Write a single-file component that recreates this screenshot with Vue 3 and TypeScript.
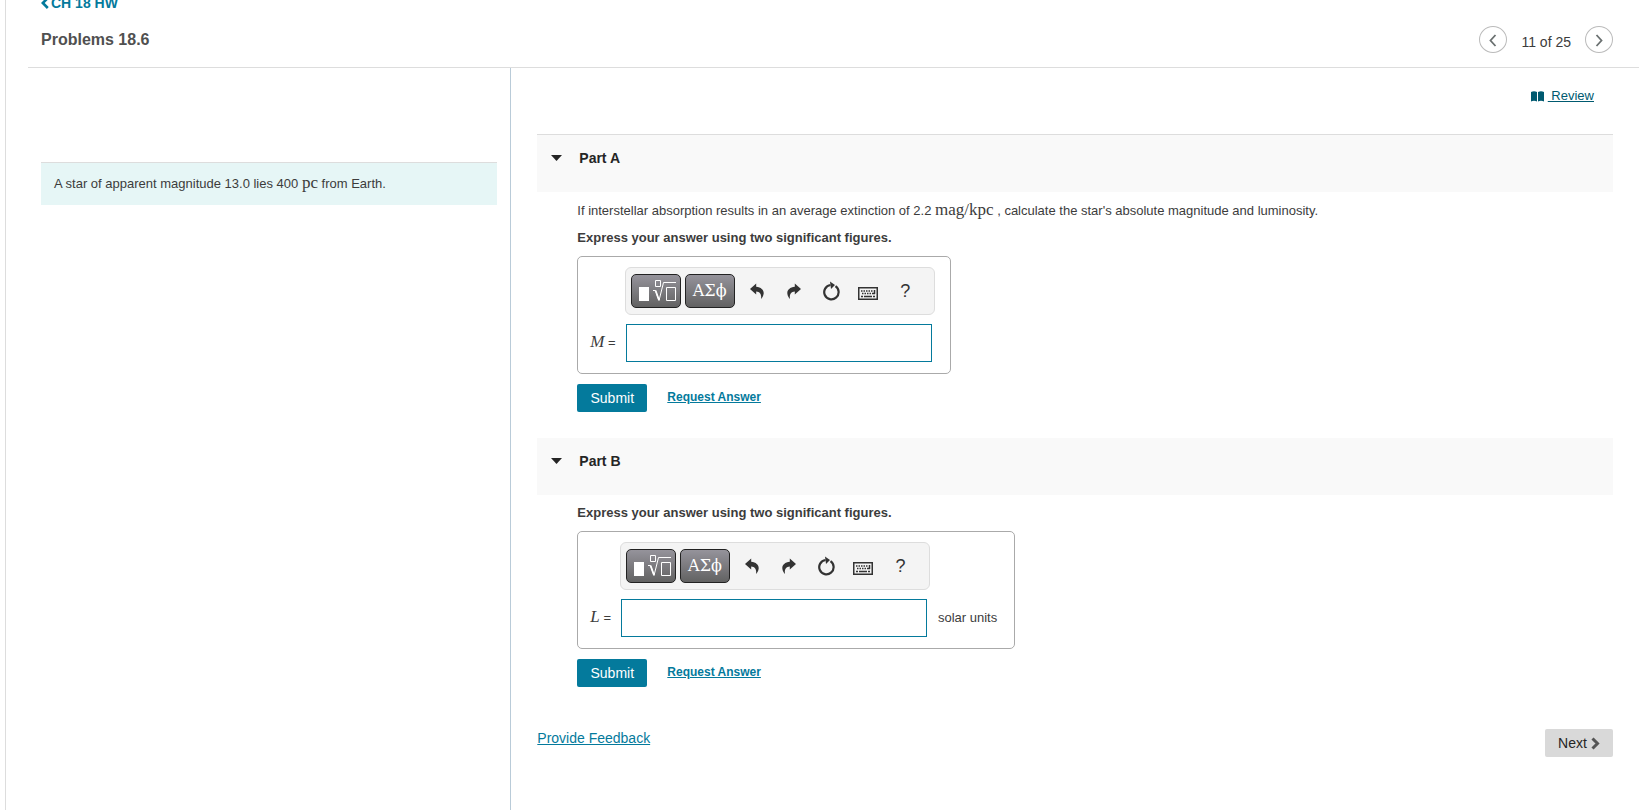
<script setup lang="ts">
import { reactive } from 'vue'

interface Part {
  id: string
  title: string
  hasQuestion: boolean
  variable: string
  unit: string
}

const parts: Part[] = [
  { id: 'a', title: 'Part A', hasQuestion: true, variable: 'M', unit: '' },
  { id: 'b', title: 'Part B', hasQuestion: false, variable: 'L', unit: 'solar units' },
]

const answers = reactive<Record<string, string>>({ a: '', b: '' })
const open = reactive<Record<string, boolean>>({ a: true, b: true })
</script>

<template>
  <div class="page">
    <header class="header">
      <div>
        <a class="back" href="#assignment">
          <svg width="8" height="12" viewBox="0 0 8 12" aria-hidden="true">
            <path d="M6.8 1 1.8 6l5 5" fill="none" stroke="currentColor" stroke-width="2.6" />
          </svg>CH 18 HW</a>
        <h1>Problems 18.6</h1>
      </div>
      <nav class="pager" aria-label="Problem navigation">
        <button type="button" class="round" aria-label="Previous problem">
          <svg width="12" height="14" viewBox="0 0 12 14" aria-hidden="true">
            <path d="M8.5 2 3.500 7.500l5 5.500" fill="none" stroke="currentColor" stroke-width="1.800" />
          </svg>
        </button>
        <span class="count">11 of 25</span>
        <button type="button" class="round" aria-label="Next problem">
          <svg width="12" height="14" viewBox="0 0 12 14" aria-hidden="true">
            <path d="M3.500 2 8.500 7.500l-5 5.500" fill="none" stroke="currentColor" stroke-width="1.800" />
          </svg>
        </button>
      </nav>
    </header>

    <div class="columns">
      <aside class="side">
        <p class="prompt">A star of apparent magnitude 13.0 lies 400 <span class="math">pc</span> from Earth.</p>
      </aside>

      <main class="main">
        <div class="review">
          <svg width="13" height="11" viewBox="0 0 13 11" aria-hidden="true">
            <path d="M0 1Q3 -.4 6 1V10.500Q3 9.200 0 10.500ZM7 1Q10 -.4 13 1V10.500Q10 9.200 7 10.500Z" fill="currentColor" />
          </svg>
          <a href="#review">&nbsp;Review</a>
        </div>

        <section v-for="part in parts" :key="part.id" class="part">
          <h2 class="part-head">
            <button type="button" :aria-expanded="open[part.id]" @click="open[part.id] = !open[part.id]">
              <svg width="11" height="6" viewBox="0 0 11 6" aria-hidden="true">
                <path d="M0 0h11L5.500 6z" fill="currentColor" />
              </svg>
              {{ part.title }}
            </button>
          </h2>

          <div v-if="open[part.id]" class="part-body">
            <p v-if="part.hasQuestion" class="question">If interstellar absorption results in an average extinction of 2.2 <span class="math">mag/kpc</span> , calculate the star's absolute magnitude and luminosity.</p>
            <p class="instruction">Express your answer using two significant figures.</p>

            <div class="answer">
              <label class="variable" :for="'answer-' + part.id"><i>{{ part.variable }}</i> =</label>
              <div class="toolbar" role="toolbar" aria-label="Equation editor">
                <button type="button" class="dark" aria-label="Templates">
                  <svg width="48" height="32" viewBox="0 0 48 32" aria-hidden="true">
                    <path d="M7 12h10v14H7z" fill="#fff" />
                    <path d="M23.500 5.500h5v6h-5zM21 15.500h2.500l3.500 10L31.500 7.500H44M34.500 12.500h9v13h-9z" fill="none" stroke="#fff" stroke-width="1" />
                    <path d="M23.500 15.500l3.500 9.500" stroke="#fff" stroke-width="1.800" />
                  </svg>
                </button>
                <button type="button" class="dark greek" aria-label="Symbols">ΑΣϕ</button>
                <button type="button" class="tool" aria-label="Undo">
                  <svg width="14" height="16" viewBox="0 0 14 16" aria-hidden="true">
                    <path d="M0 6 6.200 0.500V3.800C11.500 4.300 14.200 7.500 13.600 11 13.300 13 12.300 14.600 11 16 11.700 12 10.500 8.700 6.200 8.400V11.500Z" fill="currentColor" />
                  </svg>
                </button>
                <button type="button" class="tool" aria-label="Redo">
                  <svg width="14" height="16" viewBox="0 0 14 16" aria-hidden="true">
                    <path d="M14 6 7.800 0.500V3.800C2.500 4.300-.2 7.500.4 11 .7 13 1.700 14.600 3 16 2.300 12 3.500 8.700 7.800 8.400V11.500Z" fill="currentColor" />
                  </svg>
                </button>
                <button type="button" class="tool" aria-label="Reset">
                  <svg width="18" height="20" viewBox="0 0 18 20" aria-hidden="true">
                    <path d="M13.500 5.200A7.200 7.200 0 1 1 8.500 4" fill="none" stroke="currentColor" stroke-width="2.200" />
                    <path d="M8 .5 13 4 9 8Z" fill="currentColor" />
                  </svg>
                </button>
                <button type="button" class="tool keys" aria-label="Keyboard shortcuts">
                  <svg width="20" height="13" viewBox="0 0 20 13" aria-hidden="true">
                    <rect x=".75" y=".75" width="18.500" height="11.500" fill="none" stroke="currentColor" stroke-width="1.500" />
                    <path d="M3 4h12M4 6.500h10" fill="none" stroke="currentColor" stroke-width="1.500" stroke-dasharray="1.500 1" />
                    <path d="M16.500 3v4M14 6.500h3M3 9.500h2M6 9.500h8M15 9.500h2" fill="none" stroke="currentColor" stroke-width="1.500" />
                  </svg>
                </button>
                <button type="button" class="tool help" aria-label="Help">?</button>
              </div>
              <input :id="'answer-' + part.id" v-model="answers[part.id]" type="text" autocomplete="off" />
              <span v-if="part.unit" class="unit">{{ part.unit }}</span>
            </div>

            <div class="actions">
              <button type="button" class="submit">Submit</button>
              <a href="#request">Request Answer</a>
            </div>
          </div>
        </section>

        <footer class="footer">
          <a href="#feedback">Provide Feedback</a>
          <button type="button" class="next">Next
            <svg width="9" height="13" viewBox="0 0 9 13" aria-hidden="true">
              <path d="M1.500 1.500 6.500 6.500l-5 5" fill="none" stroke="#555" stroke-width="3" />
            </svg>
          </button>
        </footer>
      </main>
    </div>
  </div>
</template>

<style>
body {
  margin: 0;
  background: #fff;
}
</style>

<style scoped>
.page {
  display: flex;
  flex-direction: column;
  box-sizing: border-box;
  min-height: calc(100vh + 5px);
  margin: -5px 0 0 5px;
  padding: 0 10px 0 22px;
  border-left: 1px solid #ddd;
  color: #3c3c3c;
  font-family: "Liberation Sans", Arial, sans-serif;
  font-size: 13px;
  line-height: 18px;
}
button {
  padding: 0;
  border: 0;
  background: none;
  color: inherit;
  font: inherit;
  cursor: pointer;
}
h1, h2, p {
  margin: 0;
}
a {
  color: #047a9c;
}
.header {
  display: flex;
  justify-content: space-between;
  align-items: flex-start;
  height: 72px;
  padding: 0 26px 0 13px;
  border-bottom: 1px solid #ddd;
}
.back {
  display: flex;
  align-items: center;
  gap: 2px;
  font-size: 14px;
  font-weight: bold;
  line-height: 16px;
  text-decoration: none;
}
h1 {
  margin-top: 19px;
  color: #505050;
  font-size: 16px;
  line-height: 20px;
}
.pager {
  display: flex;
  align-items: flex-start;
  gap: 14px;
  margin-top: 31px;
}
.round {
  display: flex;
  justify-content: center;
  align-items: center;
  box-sizing: border-box;
  width: 28px;
  height: 27px;
  border: 1px solid #bbb;
  border-radius: 50%;
  color: #6a7070;
}
.count {
  padding-top: 7px;
  font-size: 14px;
}
.columns {
  display: flex;
  flex: 1;
}
.side {
  box-sizing: border-box;
  flex: none;
  width: 30%;
  padding: 94px 13px 0;
  border-right: 1px solid #b9cbd8;
}
.prompt {
  padding: 12px 13px;
  border-top: 1px solid #ddd;
  background: #e6f6f6;
}
.math {
  font-family: "Liberation Serif", "Times New Roman", serif;
  font-size: 17px;
  line-height: 1px;
}
.main {
  flex: 1;
  padding: 19px 26px 20px;
}
.review {
  display: flex;
  justify-content: flex-end;
  align-items: center;
  gap: 4px;
  margin-bottom: 29px;
  padding-right: 19px;
  color: #005a70;
}
.review a {
  color: #005a70;
}
.part {
  margin-bottom: 26px;
}
.part-head {
  height: 57px;
  background: #f9f9f9;
  color: #252525;
  font-size: 14px;
}
.part:nth-of-type(1) .part-head {
  border-top: 1px solid #ddd;
}
.part-head button {
  display: flex;
  align-items: center;
  gap: 17px;
  padding: 14px;
}
.part-body {
  padding: 9px 0 0 40px;
}
.question {
  margin: 1px 0 9px;
}
.instruction {
  font-weight: bold;
}
.answer {
  display: inline-grid;
  grid-template-columns: auto 308px auto;
  grid-template-rows: 48px 38px;
  row-gap: 9px;
  align-items: center;
  box-sizing: border-box;
  margin-top: 9px;
  padding: 10px 17px 11px 12px;
  border: 1px solid #aaa;
  border-radius: 5px;
}
.variable {
  grid-area: 2 / 1;
  padding: 0 9px 2px 0;
}
.variable i {
  font-family: "Liberation Serif", "Times New Roman", serif;
  font-size: 17px;
}
.toolbar {
  display: flex;
  grid-area: 1 / 2;
  align-items: center;
  box-sizing: border-box;
  width: 310px;
  height: 48px;
  padding: 0 5px;
  border: 1px solid #ddd;
  border-radius: 6px;
  background: #f4f4f4;
  color: #333;
}
.dark {
  display: flex;
  justify-content: center;
  align-items: center;
  box-sizing: border-box;
  width: 50px;
  height: 34px;
  margin-right: 4px;
  border: 1px solid #222;
  border-radius: 5px;
  background: linear-gradient(#95939b, #626262);
  color: #fff;
}
.greek {
  font-family: "DejaVu Serif", serif;
  font-size: 16px;
}
.tool {
  display: flex;
  justify-content: center;
  align-items: center;
  width: 37px;
  height: 34px;
}
.keys {
  padding-top: 4px;
}
.help {
  font-size: 18px;
}
.answer input {
  grid-area: 2 / 2;
  box-sizing: border-box;
  width: 306px;
  height: 38px;
  margin-left: 1px;
  padding: 0 8px;
  border: 1px solid #047a9c;
  background: #fff;
  font: inherit;
}
.unit {
  grid-area: 2 / 3;
  padding-left: 10px;
}
.actions {
  display: flex;
  align-items: flex-start;
  gap: 20px;
  margin-top: 10px;
  font-size: 12px;
  font-weight: bold;
}
.actions a {
  padding-top: 4px;
}
.submit {
  width: 70px;
  height: 28px;
  border-radius: 2px;
  background: #047a9c;
  color: #fff;
  font-size: 14px;
  font-weight: normal;
}
.footer {
  display: flex;
  justify-content: space-between;
  align-items: flex-start;
  padding-top: 16px;
  font-size: 14px;
}
.next {
  display: flex;
  justify-content: center;
  align-items: center;
  gap: 4px;
  width: 68px;
  height: 28px;
  border-radius: 2px;
  background: #d9d9d9;
  color: #252525;
}
</style>
